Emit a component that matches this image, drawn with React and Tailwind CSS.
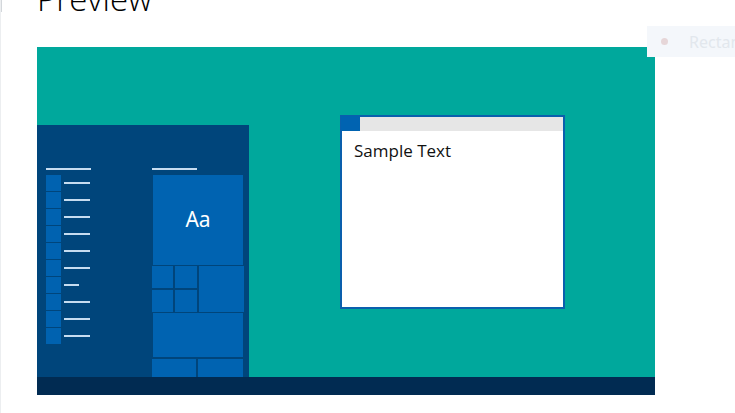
import React from 'react';

const rows = [26, 26, 26, 26, 26, 26, 15, 26, 26, 26];

export default function App() {
  return (
    <div className="relative w-[735px] h-[413px] overflow-hidden bg-white border-l border-[#eceef0]" style={{ fontFamily: '"Open Sans", "Noto Sans", sans-serif' }}>
      <div className="absolute left-[-1px] top-0 w-[2px] h-[12px] bg-[#d3d7db]" />

      <div className="pl-[36px]">
        <h1 className="text-[33px] leading-[30px] font-light text-black mt-[-16px] h-[30px] whitespace-nowrap">Preview</h1>

        <div className="mt-[33px] w-[618px] h-[348px] flex flex-col">
          <div className="flex-1 bg-[#00a89c] flex items-start overflow-hidden">
            <StartMenu />
            <div className="ml-[91px] mt-[68px] w-[225px] h-[194px] border-2 border-[#0a5fad] bg-white flex flex-col shrink-0">
              <div className="h-[14px] bg-[#e6e6e6] flex shrink-0">
                <div className="w-[19px] bg-[#0063b1] -mt-[1px] -ml-[1px] h-[15px]" />
              </div>
              <p className="pl-[12px] pt-[9px] text-[17px] leading-[22px] text-[#111] whitespace-nowrap">Sample Text</p>
            </div>
          </div>
          <div className="h-[18px] bg-[#012b52] shrink-0" />
        </div>
      </div>

      <div className="absolute left-[646px] top-[26px] w-[100px] h-[31px] bg-[#f4f7fb] flex items-center">
        <span className="ml-[14px] w-[7px] h-[7px] rounded-full bg-[#e6d6d8] shrink-0" />
        <span className="ml-[21px] text-[16px] text-[#e2e7ed] whitespace-nowrap" style={{ fontFamily: '"Noto Sans", sans-serif' }}>Rectangle</span>
      </div>
    </div>
  );
}

function StartMenu() {
  return (
    <div className="self-end w-[212px] h-[252px] bg-[#00457b] overflow-hidden flex pl-[9px] pt-[43px] shrink-0">
      <div className="w-[45px] flex flex-col shrink-0">
        <div className="h-[2px] w-[45px] bg-[#c6dcf0] shrink-0" />
        <div className="mt-[5px] flex flex-col gap-[1px]">
          {rows.map((w, i) => (
            <div key={i} className="h-[16px] flex items-center shrink-0">
              <div className="w-[15px] h-[16px] bg-[#0062b0]" />
              <div className="ml-[3px] h-[2px] bg-[#c6dcf0]" style={{ width: w }} />
            </div>
          ))}
        </div>
      </div>

      <div className="ml-[61px] w-[92px] flex flex-col shrink-0">
        <div className="h-[2px] w-[45px] bg-[#c6dcf0] shrink-0" />
        <div className="mt-[5px] ml-[1px] w-[90px] h-[90px] bg-[#0063b1] flex items-center justify-center shrink-0">
          <span className="text-white text-[21px]" style={{ fontFamily: '"Noto Sans", sans-serif' }}>Aa</span>
        </div>
        <div className="mt-[1px] flex gap-[2px] shrink-0">
          <div className="grid grid-cols-[21px_22px] grid-rows-[22px_22px] gap-[2px]">
            <div className="bg-[#0063b1]" />
            <div className="bg-[#0063b1]" />
            <div className="bg-[#0063b1]" />
            <div className="bg-[#0063b1]" />
          </div>
          <div className="w-[45px] h-[46px] bg-[#0063b1]" />
        </div>
        <div className="mt-[1px] ml-[1px] w-[90px] h-[44px] bg-[#0063b1] shrink-0" />
        <div className="mt-[2px] flex gap-[2px] shrink-0">
          <div className="w-[44px] h-[30px] bg-[#0063b1]" />
          <div className="w-[45px] h-[30px] bg-[#0063b1]" />
        </div>
      </div>
    </div>
  );
}
